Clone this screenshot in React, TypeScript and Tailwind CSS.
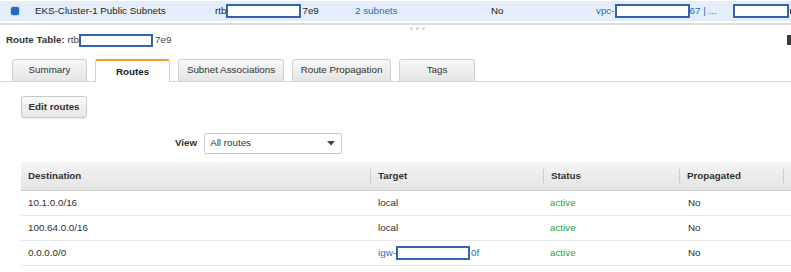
import React from "react";

function Redact({ w, h = 14 }: { w: number; h?: number }) {
  return (
    <span
      className="inline-block shrink-0 border-2 border-[#3563b4] bg-white"
      style={{ width: w, height: h }}
    />
  );
}

function TabBtn({ label, w, active }: { label: string; w: number; active?: boolean }) {
  if (active) {
    return (
      <div
        className="relative -mb-px flex h-[23px] items-center justify-center rounded-t-[3px] border border-b-0 border-t-2 border-[#d0d0d0] border-t-[#f39c2c] bg-white pt-[2px] text-[9.8px] font-bold text-[#222]"
        style={{ width: w }}
      >
        {label}
      </div>
    );
  }
  return (
    <div
      className="flex h-[22px] items-center justify-center rounded-t-[3px] border border-b-0 border-[#cfcfcf] bg-gradient-to-b from-[#f8f8f8] to-[#e4e4e4] pb-[1px] text-[9.8px] text-[#333]"
      style={{ width: w }}
    >
      {label}
    </div>
  );
}

function HeaderCell({ label, w, sep }: { label: string; w: number; sep?: boolean }) {
  return (
    <div className="flex h-full shrink-0 items-center" style={{ width: w }}>
      {sep ? <div className="h-[14px] w-px bg-[#cdcdcd]" /> : null}
      <span className="pl-[7px]">{label}</span>
    </div>
  );
}

const rows = [
  { dest: "10.1.0.0/16", target: "local" },
  { dest: "100.64.0.0/16", target: "local" },
  { dest: "0.0.0.0/0", target: "igw" },
];

export default function App() {
  return (
    <div className="h-[272px] w-[791px] overflow-hidden bg-white font-['Liberation_Sans',Helvetica,Arial,sans-serif] text-[9.8px] text-[#2e2e2e]">
      {/* selected row */}
      <div className="mt-[1px] flex h-[20px] items-center bg-[#e3eefa] text-[#1e1e1e]">
        <div className="flex w-[35px] shrink-0 pl-[10px]">
          <div className="h-[10px] w-[10px] rounded-[3px] bg-[#c9d2dd] p-[1px]">
            <div className="h-full w-full rounded-[2px] bg-[#2468cf]" />
          </div>
        </div>
        <div className="w-[180px] shrink-0">EKS-Cluster-1 Public Subnets</div>
        <div className="flex w-[140px] shrink-0 items-center">
          <span>rtb</span>
          <Redact w={75} />
          <span className="pl-[1px]">7e9</span>
        </div>
        <div className="w-[136px] shrink-0 text-[#1f6bc4]">2 subnets</div>
        <div className="w-[105px] shrink-0">No</div>
        <div className="flex w-[137px] shrink-0 items-center text-[#1f6bc4]">
          <span>vpc-</span>
          <Redact w={75} />
          <span>67 | ...</span>
        </div>
        <div className="flex items-center">
          <Redact w={56} />
          <div className="ml-[1px] h-[5px] w-[3px] bg-[#444]" />
        </div>
      </div>
      <div className="mt-[2px] h-[2px] bg-[#dcdcdc]" />
      {/* drag handle */}
      <div className="flex h-[6px] items-center gap-[3px] pl-[410px] pt-[1px]">
        <div className="h-[3px] w-[3px] rounded-full bg-[#d2d2d2]" />
        <div className="h-[3px] w-[3px] rounded-full bg-[#d2d2d2]" />
        <div className="h-[3px] w-[3px] rounded-full bg-[#d2d2d2]" />
      </div>
      {/* route table title */}
      <div className="mt-[1px] flex h-[16px] items-center pl-[6px]">
        <span className="font-bold text-[#333]">Route Table:</span>
        <span className="pl-[3px] text-[#444]">rtb</span>
        <Redact w={74} h={13} />
        <span className="pl-[2px] text-[#444]">7e9</span>
        <div className="ml-auto h-[10px] w-[4px] bg-[#3a3a3a]" />
      </div>
      {/* tabs */}
      <div className="mt-[11px] flex items-end gap-[8px] border-b border-[#d6d6d6] pl-[12px]">
        <TabBtn label="Summary" w={75} />
        <TabBtn label="Routes" w={75} active />
        <TabBtn label="Subnet Associations" w={106} />
        <TabBtn label="Route Propagation" w={99} />
        <TabBtn label="Tags" w={76} />
      </div>
      {/* edit routes */}
      <div className="mt-[14px] pl-[21px]">
        <div className="flex h-[22px] w-[66px] items-center justify-center rounded-[3px] border border-[#c8c8c8] bg-gradient-to-b from-[#fafafa] to-[#e6e6e6] font-bold text-[#333] shadow-[0_1px_1px_rgba(0,0,0,0.08)]">
          Edit routes
        </div>
      </div>
      {/* view select */}
      <div className="mt-[15px] flex items-center gap-[7px] pl-[175px]">
        <span className="font-bold text-[#333]">View</span>
        <div className="flex h-[21px] w-[138px] items-center justify-between rounded-[2px] border border-[#c9c9c9] bg-white pl-[5px] pr-[6px] text-[#333]">
          <span>All routes</span>
          <svg width="8" height="5" viewBox="0 0 8 5">
            <path d="M0 0 L8 0 L4 4.5 Z" fill="#444" />
          </svg>
        </div>
      </div>
      {/* table */}
      <div className="ml-[21px] mt-[8px]">
        <div className="flex h-[29px] items-center border-b border-[#cfcfcf] bg-gradient-to-b from-[#f4f4f4] to-[#e4e4e4] font-bold text-[#333]">
          <HeaderCell label="Destination" w={349} />
          <HeaderCell label="Target" w={173} sep />
          <HeaderCell label="Status" w={136} sep />
          <HeaderCell label="Propagated" w={104} sep />
          <div className="flex h-full items-center">
            <div className="h-[14px] w-px bg-[#cdcdcd]" />
          </div>
        </div>
        {rows.map((r, i) => (
          <div
            key={i}
            className="flex h-[25px] items-center border-b border-[#e6e6e6]"
          >
            <div className="w-[349px] shrink-0 pl-[7px]">{r.dest}</div>
            <div className="flex w-[173px] shrink-0 items-center pl-[8px]">
              {r.target === "igw" ? (
                <span className="flex items-center text-[#1f6bc4]">
                  <span>igw-</span>
                  <Redact w={74} h={14} />
                  <span className="pl-[1px]">0f</span>
                </span>
              ) : (
                <span>{r.target}</span>
              )}
            </div>
            <div className="w-[136px] shrink-0 pl-[7px] text-[#2ea043]">active</div>
            <div className="w-[104px] shrink-0 pl-[9px]">No</div>
          </div>
        ))}
      </div>
    </div>
  );
}
